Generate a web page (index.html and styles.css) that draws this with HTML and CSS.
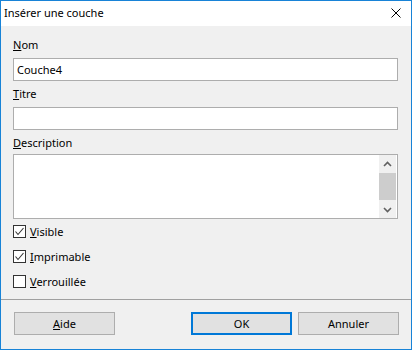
FILE: index.html
```html
<!DOCTYPE html>
<html lang="fr">
<head>
    <meta charset="UTF-8">
    <title>Insérer une couche</title>
    <link rel="stylesheet" href="styles.css">
</head>
<body>
    <div class="dialog">
        <div class="titlebar">
            <span class="title">Insérer une couche</span>
            <svg class="close" width="10" height="10" viewBox="0 0 10 10">
                <path d="M0.5 0.5 L9.5 9.5 M9.5 0.5 L0.5 9.5" stroke="#000" stroke-width="1" fill="none"/>
            </svg>
        </div>

        <div class="content">
            <label class="field-label" for="nom"><u>N</u>om</label>
            <input class="field" type="text" id="nom" value="Couche4">

            <label class="field-label" for="titre"><u>T</u>itre</label>
            <input class="field" type="text" id="titre" value="">

            <label class="field-label" for="desc"><u>D</u>escription</label>
            <div class="textarea" id="desc">
                <div class="text-space"></div>
                <div class="scrollbar">
                    <div class="scroll-btn">
                        <svg width="9" height="6" viewBox="0 0 9 6"><path d="M1 5 L4.5 1.5 L8 5" stroke="#606060" stroke-width="1.6" fill="none"/></svg>
                    </div>
                    <div class="scroll-track"><div class="scroll-thumb"></div></div>
                    <div class="scroll-btn">
                        <svg width="9" height="6" viewBox="0 0 9 6"><path d="M1 1 L4.5 4.5 L8 1" stroke="#606060" stroke-width="1.6" fill="none"/></svg>
                    </div>
                </div>
            </div>

            <div class="checks">
                <div class="check-row">
                    <span class="box">
                        <svg width="11" height="11" viewBox="0 0 11 11"><path d="M1.5 5.5 L4 8.5 L9.5 2" stroke="#333" stroke-width="1.1" fill="none"/></svg>
                    </span>
                    <span><u>V</u>isible</span>
                </div>
                <div class="check-row">
                    <span class="box">
                        <svg width="11" height="11" viewBox="0 0 11 11"><path d="M1.5 5.5 L4 8.5 L9.5 2" stroke="#333" stroke-width="1.1" fill="none"/></svg>
                    </span>
                    <span><u>I</u>mprimable</span>
                </div>
                <div class="check-row">
                    <span class="box"></span>
                    <span><u>V</u>errouillée</span>
                </div>
            </div>
        </div>

        <div class="footer">
            <button class="btn"><u>A</u>ide</button>
            <div class="spacer"></div>
            <button class="btn default">OK</button>
            <button class="btn">Annuler</button>
        </div>
    </div>
</body>
</html>
```

FILE: styles.css
```css
body {
    margin: 0;
    font-family: "Noto Sans", "Open Sans", sans-serif;
    font-size: 11px;
    color: #000;
    background: #f0f0f0;
}
.dialog {
    width: 412px;
    height: 350px;
    box-sizing: border-box;
    border: 1px solid #1883d7;
    background: #f0f0f0;
    display: flex;
    flex-direction: column;
}
.titlebar {
    height: 25px;
    background: #fff;
    display: flex;
    align-items: center;
    padding: 0 10px 0 3px;
}
.title {
    flex: 1;
    line-height: 15px;
    margin-top: -2px;
}
.close {
    margin-top: -2px;
}
.content {
    padding: 11px 13px 0 12px;
    display: flex;
    flex-direction: column;
}
.field-label {
    display: block;
    line-height: 15px;
    height: 15px;
}
.field {
    box-sizing: border-box;
    height: 23px;
    margin: 6px 0 5px;
    border: 1px solid #adadad;
    background: #fff;
    font: inherit;
    padding: 0 3px;
    outline: none;
}
.textarea {
    box-sizing: border-box;
    height: 65px;
    margin-top: 4px;
    border: 1px solid #adadad;
    background: #fff;
    display: flex;
}
.text-space {
    flex: 1;
}
.scrollbar {
    width: 17px;
    margin-right: 1px;
    background: #f0f0f0;
    display: flex;
    flex-direction: column;
}
.scroll-btn {
    height: 17px;
    display: flex;
    align-items: center;
    justify-content: center;
}
.scroll-track {
    flex: 1;
    padding: 1px 0;
    display: flex;
}
.scroll-thumb {
    flex: 1;
    background: #cdcdcd;
}
.checks {
    margin-top: 5px;
    display: flex;
    flex-direction: column;
    gap: 10px;
}
.check-row {
    display: flex;
    align-items: center;
    gap: 4px;
    height: 15px;
}
.box {
    box-sizing: border-box;
    width: 13px;
    height: 13px;
    border: 1px solid #333;
    background: #fff;
    display: flex;
    align-items: center;
    justify-content: center;
}
.footer {
    margin-top: auto;
    border-top: 1px solid #a0a0a0;
    height: 50px;
    box-sizing: border-box;
    display: flex;
    align-items: flex-start;
    padding: 12px 12px 0 13px;
    gap: 6px;
}
.spacer {
    flex: 1;
}
.btn {
    box-sizing: border-box;
    width: 101px;
    height: 23px;
    border: 1px solid #adadad;
    background: #e1e1e1;
    font: inherit;
    color: #000;
    padding: 0;
}
.btn.default {
    border: 2px solid #0078d7;
}
```
